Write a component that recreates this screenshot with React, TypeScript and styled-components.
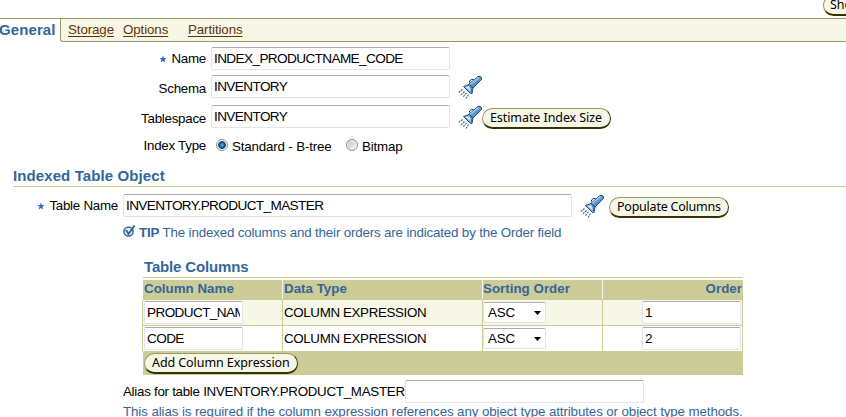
import React from "react";
import styled, { createGlobalStyle, css } from "styled-components";

const GlobalStyle = createGlobalStyle`
  html, body { margin: 0; padding: 0; background: #fff; }
  body { overflow: hidden; }
  * { box-sizing: border-box; }
`;

const olive = "#999966";
const khaki = "#cccc99";
const cream = "#f7f7e7";
const blue = "#336699";

const Page = styled.div`
  width: 846px;
  height: 417px;
  overflow: hidden;
  background: #fff;
  color: #000;
  font: 13.33px/16px "Liberation Sans", Arial, sans-serif;
  white-space: nowrap;
`;

const TopActions = styled.div`
  height: 18px;
  padding-left: 823px;
  overflow: hidden;
`;

const PillButton = styled.button<{ $w: number; $ls?: number; $raised?: boolean }>`
  display: flex;
  flex: none;
  align-items: center;
  width: ${(p) => p.$w}px;
  height: 21px;
  margin: ${(p) => (p.$raised ? "-5px 0 0" : "0")};
  padding: 0 0 0 ${(p) => (p.$raised ? 6 : 7)}px;
  border: 1px solid ${olive};
  border-right-color: #333300;
  border-bottom: 2px solid #333300;
  border-radius: 11px;
  background: ${cream};
  color: #000;
  font: 12.5px/16px "Noto Sans", sans-serif;
  letter-spacing: ${(p) => p.$ls ?? -0.08}px;
  white-space: nowrap;
`;

const TabBar = styled.nav`
  display: flex;
  height: 24px;
  border-top: 1px solid ${olive};
`;

const ActiveTab = styled.div`
  width: 60px;
  padding-top: 3px;
  color: ${blue};
  font-size: 15px;
  font-weight: bold;
  letter-spacing: 0.1px;
  text-indent: -1px;
`;

const TabLinks = styled.div`
  display: flex;
  flex: 1;
  height: 23px;
  padding: 3px 0 0 7px;
  border-left: 1px solid ${olive};
  border-bottom: 1px solid ${olive};
  border-bottom-left-radius: 3px;
  background: ${cream};
`;

const TabLink = styled.a<{ $w: number }>`
  width: ${(p) => p.$w}px;
  color: #663300;
  letter-spacing: -0.1px;
  text-decoration: underline;
  text-underline-offset: 2px;
`;

const Form = styled.div`
  display: grid;
  grid-template-columns: 206px 1fr;
  grid-template-rows: 28px 30px 30px 23px;
  column-gap: 5px;
  padding-top: 5px;
`;

const Label = styled.label<{ $drop?: number }>`
  display: flex;
  justify-content: flex-end;
  gap: 4px;
  padding-top: ${(p) => p.$drop ?? 4}px;
  letter-spacing: -0.25px;
`;

const Controls = styled.div`
  display: flex;
  align-items: flex-start;
`;

const Field = styled.div<{ $w: number }>`
  flex: none;
  width: ${(p) => p.$w}px;
  height: 23px;
  padding: 3px 2px 0;
  overflow: hidden;
  border: 1px solid #e1e3ea;
  border-top-color: #abadb3;
  border-radius: 2px;
  background: #fff;
  font-size: 13.6px;
  letter-spacing: -0.62px;
`;

const Clip = styled.div`
  overflow: hidden;
`;

const Choices = styled.div`
  display: flex;
  padding: 4px 0 0 5px;
  letter-spacing: -0.16px;
`;

const Choice = styled.label<{ $w: number }>`
  display: flex;
  gap: 4px;
  width: ${(p) => p.$w}px;
`;

const Radio = styled.span<{ $on?: boolean }>`
  width: 12px;
  height: 12px;
  border: 1px solid #8e8f8f;
  border-radius: 50%;
  ${(p) =>
    p.$on
      ? css`background: radial-gradient(circle at 50% 50%, #62c5e8 0, #2a85b8 1.5px, #0b3558 3.4px, #e8ecef 4.2px, #fff 5px);`
      : css`background: linear-gradient(135deg, #b9bdc3, #fff); box-shadow: inset 0 0 0 1px #f4f4f4;`}
`;

const LensLink = styled.a<{ $end?: number }>`
  flex: none;
  width: 24px;
  height: 24px;
  margin: 0 ${(p) => p.$end ?? 0}px 0 8px;
`;

const ButtonSlot = styled.div`
  padding-top: 3px;
`;

const SectionTitle = styled.h2`
  height: 29px;
  margin: 0 0 0 13px;
  padding-top: 9px;
  border-bottom: 1px solid ${khaki};
  color: ${blue};
  font-size: 15px;
  line-height: 17px;
  letter-spacing: 0.1px;
`;

const TableNameRow = styled.div`
  display: grid;
  grid-template-columns: 118px 1fr;
  column-gap: 5px;
  height: 30px;
  margin-top: 7px;
`;

const Tip = styled.div`
  display: flex;
  gap: 3px;
  height: 30px;
  padding: 1px 0 0 123px;
  color: ${blue};
`;

const TipText = styled.div`
  letter-spacing: -0.16px;
`;

const TipIconSvg = styled.svg`
  margin-top: -1px;
`;

const Columns = styled.section`
  width: 601px;
  margin-left: 142px;
`;

const ColumnsTitle = styled.h3`
  height: 24px;
  margin: 0 0 2px 1px;
  padding: 4px 0 0 1px;
  border-bottom: 1px solid ${khaki};
  color: ${blue};
  font-size: 15px;
  line-height: 17px;
  letter-spacing: -0.15px;
`;

const rowGrid = css`
  display: grid;
  grid-template-columns: 139px 199px 119px 139px;
  column-gap: 1px;
`;

const HeadRow = styled.div`
  ${rowGrid}
  height: 20px;
  padding-left: 1px;
  margin-left: 0;
  background: linear-gradient(to right, #fff 1px, ${khaki} 1px);
`;

const HeadCell = styled.div<{ $right?: boolean; $first?: boolean; $pad?: number }>`
  height: 19px;
  margin-left: -1px;
  padding: 1px 0 0 ${(p) => p.$pad ?? 0}px;
  border-left: 1px solid ${(p) => (p.$first ? "transparent" : "#f7f7e7")};
  color: ${blue};
  font-weight: bold;
  letter-spacing: 0.02px;
  text-align: ${(p) => (p.$right ? "right" : "left")};
`;

const BodyRow = styled.div<{ $tint?: boolean }>`
  ${rowGrid}
  padding: 0 1px;
  height: ${(p) => (p.$tint ? 26 : 25)}px;
  border-bottom: ${(p) => (p.$tint ? `1px solid ${khaki}` : "0")};
  background: ${khaki};
  & > div { background: ${(p) => (p.$tint ? cream : "#fff")}; }
`;

const Cell = styled.div<{ $right?: boolean }>`
  display: flex;
  align-items: flex-start;
  justify-content: ${(p) => (p.$right ? "flex-end" : "flex-start")};
  padding: 1px ${(p) => (p.$right ? 1 : 0)}px 0 1px;
`;

const CellText = styled.span`
  padding-top: 4px;
  letter-spacing: -0.35px;
`;

const Select = styled.div`
  display: flex;
  justify-content: space-between;
  width: 63px;
  height: 21px;
  margin-left: -1px;
  margin-top: 1px;
  padding: 2px 4px 0;
  border: 1px solid #e1e3ea;
  border-top-color: #abadb3;
  border-radius: 2px;
  background: #fff;
  letter-spacing: -0.2px;
`;

const Arrow = styled.svg`
  margin-top: 6px;
`;

const FootRow = styled.div`
  height: 24px;
  margin-left: 1px;
  padding: 2px 0 0 1px;
  background: ${khaki};
`;

const Alias = styled.div`
  display: flex;
  height: 24px;
  margin-top: 5px;
  padding-left: 123px;
`;

const AliasLabel = styled.span`
  width: 282px;
  padding-top: 4px;
  letter-spacing: -0.27px;
`;

const Hint = styled.div`
  padding-left: 123px;
  color: ${blue};
  letter-spacing: -0.1px;
`;

const StarSlot = styled.span`
  display: flex;
  padding-top: 4px;
`;

const Required = () => (
  <StarSlot>
    <svg width="8" height="8" viewBox="0 0 8 8">
      <path d="M4 0.5L4.9 3L7.5 3L5.5 4.8L6.3 7.5L4 6L1.7 7.5L2.5 4.8L0.5 3L3.1 3Z" fill="#3366cc" />
    </svg>
  </StarSlot>
);

const Flashlight = ({ end }: { end?: number }) => (
  <LensLink $end={end}>
    <svg width="24" height="24" viewBox="0 0 24 24">
      <path d="M11.5 7.5V6L13.5 4.5H15.5" fill="none" stroke="#003366" />
      <path d="M20 1.5H22.5L23.5 2.5V4.5L15 13L10.5 9.5Z" fill="#5b91c5" stroke="#1f4f80" />
      <path d="M12 9.5L20.5 2.5" stroke="#b5d7f2" strokeWidth="1.3" />
      <path d="M12 10.2L21.8 3.2" stroke="#76a9dc" strokeWidth="1.2" />
      <path d="M5.5 11.5L11 9.5L15 13L14 18.5H12.5Z" fill="#72a6d6" stroke="#1f4f80" />
      <path d="M7 12L11.5 11L13 16.5Z" fill="#c9e4f7" />
      <path d="M12 11.5L14 13.5L13.3 17" fill="none" stroke="#336699" />
      <path d="M4.5 14.5L.8 17.5M6.5 16.5L2.3 20.5M8.5 18L5 22M10.5 19.5L8 23.5" stroke="#336699" strokeWidth="1.1" strokeDasharray="2 .8" />
    </svg>
  </LensLink>
);

const TipIcon = () => (
  <TipIconSvg width="13" height="14" viewBox="0 0 13 14">
    <circle cx="5.5" cy="7.5" r="4.6" fill="#edf4fa" stroke="#336699" strokeWidth="1.5" />
    <path d="M3 6L5.5 10L11.5 1.5" fill="none" stroke="#336699" strokeWidth="2" />
  </TipIconSvg>
);

const rows = [
  { name: "PRODUCT_NAME", type: "COLUMN EXPRESSION", sort: "ASC", order: "1" },
  { name: "CODE", type: "COLUMN EXPRESSION", sort: "ASC", order: "2" },
];

export default function App() {
  return (
    <Page>
      <GlobalStyle />
      <TopActions>
        <PillButton $w={80} $raised>Show SQL</PillButton>
      </TopActions>
      <TabBar>
        <ActiveTab>General</ActiveTab>
        <TabLinks>
          <TabLink $w={55}>Storage</TabLink>
          <TabLink $w={65}>Options</TabLink>
          <TabLink $w={60}>Partitions</TabLink>
        </TabLinks>
      </TabBar>
      <Form>
        <Label><Required />Name</Label>
        <Controls><Field $w={239}>INDEX_PRODUCTNAME_CODE</Field></Controls>
        <Label $drop={6}>Schema</Label>
        <Controls><Field $w={239}>INVENTORY</Field><Flashlight /></Controls>
        <Label $drop={6}>Tablespace</Label>
        <Controls>
          <Field $w={239}>INVENTORY</Field>
          <Flashlight />
          <ButtonSlot><PillButton $w={129}>Estimate Index Size</PillButton></ButtonSlot>
        </Controls>
        <Label $drop={3}>Index Type</Label>
        <Choices>
          <Choice $w={130}><Radio $on />Standard - B-tree</Choice>
          <Choice $w={70}><Radio />Bitmap</Choice>
        </Choices>
      </Form>
      <SectionTitle>Indexed Table Object</SectionTitle>
      <TableNameRow>
        <Label><Required />Table Name</Label>
        <Controls>
          <Field $w={449}>INVENTORY.PRODUCT_MASTER</Field>
          <Flashlight end={5} />
          <ButtonSlot><PillButton $w={120} $ls={-0.23}>Populate Columns</PillButton></ButtonSlot>
        </Controls>
      </TableNameRow>
      <Tip>
        <TipIcon />
        <TipText><b>TIP</b> The indexed columns and their orders are indicated by the Order field</TipText>
      </Tip>
      <Columns>
        <ColumnsTitle>Table Columns</ColumnsTitle>
        <HeadRow>
          <HeadCell $first $pad={1}>Column Name</HeadCell>
          <HeadCell $pad={1}>Data Type</HeadCell>
          <HeadCell>Sorting Order</HeadCell>
          <HeadCell $right>Order</HeadCell>
        </HeadRow>
        {rows.map((row, i) => (
          <BodyRow key={row.order} $tint={i === 0}>
            <Cell><Field $w={99}><Clip>{row.name}</Clip></Field></Cell>
            <Cell><CellText>{row.type}</CellText></Cell>
            <Cell>
              <Select>
                {row.sort}
                <Arrow width="7" height="4" viewBox="0 0 7 4"><path d="M0 0H7L3.5 4Z" /></Arrow>
              </Select>
            </Cell>
            <Cell $right><Field $w={99}>{row.order}</Field></Cell>
          </BodyRow>
        ))}
        <FootRow><PillButton $w={154}>Add Column Expression</PillButton></FootRow>
      </Columns>
      <Alias>
        <AliasLabel>Alias for table INVENTORY.PRODUCT_MASTER</AliasLabel>
        <Field $w={239} />
      </Alias>
      <Hint>This alias is required if the column expression references any object type attributes or object type methods.</Hint>
    </Page>
  );
}
